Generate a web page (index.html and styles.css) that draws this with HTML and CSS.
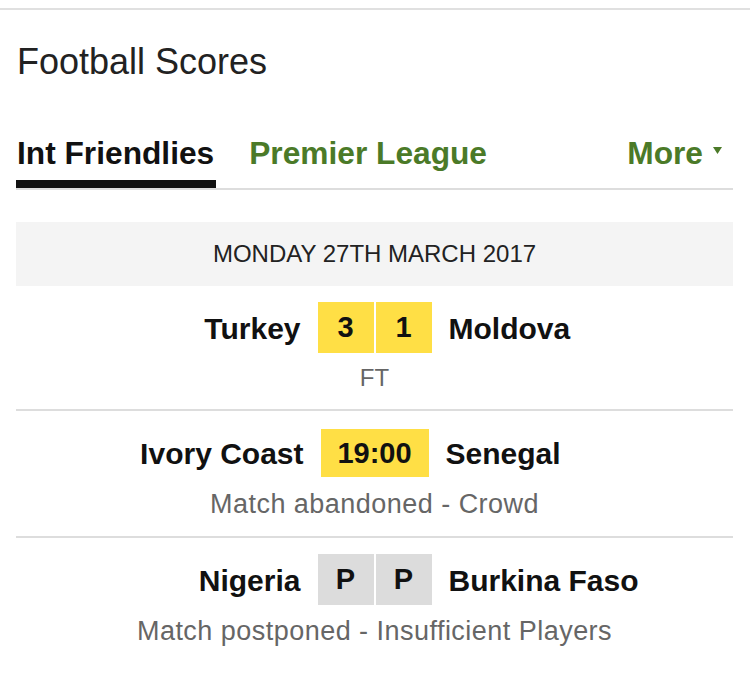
FILE: index.html
```html
<!DOCTYPE html>
<html lang="en">
<head>
<meta charset="utf-8">
<title>Football Scores</title>
<link rel="stylesheet" href="styles.css">
</head>
<body>
<div class="top-rule"></div>
<section class="widget">
  <h1 class="title">Football Scores</h1>
  <nav class="tabs">
    <a class="tab active">Int Friendlies</a>
    <a class="tab">Premier League</a>
    <a class="tab more">More<svg class="caret" width="9" height="7" viewBox="0 0 9 7"><path d="M0 0H9L4.5 7Z" fill="#4b7a28"/></svg></a>
  </nav>
  <div class="date-bar">MONDAY 27TH MARCH 2017</div>
  <div class="match">
    <div class="match-line">
      <span class="team home">Turkey</span>
      <span class="scores"><span class="box score">3</span><span class="box score">1</span></span>
      <span class="team away">Moldova</span>
    </div>
    <div class="status ft">FT</div>
  </div>
  <div class="match">
    <div class="match-line">
      <span class="team home">Ivory Coast</span>
      <span class="scores"><span class="box time">19:00</span></span>
      <span class="team away">Senegal</span>
    </div>
    <div class="status">Match abandoned - Crowd</div>
  </div>
  <div class="match last">
    <div class="match-line">
      <span class="team home">Nigeria</span>
      <span class="scores"><span class="box score grey">P</span><span class="box score grey">P</span></span>
      <span class="team away">Burkina Faso</span>
    </div>
    <div class="status">Match postponed - Insufficient Players</div>
  </div>
</section>
</body>
</html>
```
FILE: styles.css
```css
html, body {
  margin: 0;
  padding: 0;
  background: #ffffff;
  font-family: "Liberation Sans", Arial, Helvetica, sans-serif;
  color: #111111;
}

.top-rule {
  margin-top: 8px;
  height: 2px;
  background: #e0e0e0;
}

.widget {
  padding: 0 17px 0 16px;
}

.title {
  margin: 30px 0 0 1px;
  font-size: 36px;
  line-height: 44px;
  font-weight: normal;
  color: #222222;
}

.tabs {
  display: flex;
  align-items: flex-end;
  margin-top: 49px;
  border-bottom: 2px solid #dddddd;
}

.tab {
  display: block;
  font-size: 31.7px;
  line-height: 40px;
  font-weight: bold;
  color: #4b7a28;
  padding-bottom: 7px;
  border-bottom: 8px solid transparent;
}

.tab.active {
  color: #111111;
  border-bottom-color: #111111;
  padding: 0 2px 7px 1px;
  margin-right: 33px;
}

.tab.more {
  margin-left: auto;
  padding-right: 11px;
  display: flex;
  align-items: center;
}

.caret {
  display: block;
  margin-left: 10px;
  margin-top: -5px;
}

.date-bar {
  margin-top: 32px;
  height: 64px;
  line-height: 64px;
  background: #f4f4f4;
  text-align: center;
  font-size: 24px;
  color: #222222;
}

.match {
  padding: 16px 0 16px;
  border-bottom: 2px solid #dddddd;
}

.match.last {
  border-bottom: none;
}

.match-line {
  display: grid;
  grid-template-columns: 1fr auto 1fr;
  column-gap: 17px;
  align-items: center;
  min-height: 51px;
}

.team {
  font-size: 30px;
  font-weight: bold;
  color: #111111;
  line-height: 34px;
  padding-top: 2px;
}

.team.home {
  text-align: right;
}

.team.away {
  text-align: left;
}

.scores {
  display: flex;
  gap: 2px;
}

.box {
  display: flex;
  align-items: center;
  justify-content: center;
  background: #ffdf45;
  font-weight: bold;
  font-size: 29px;
  color: #111111;
}

.box.score {
  width: 56px;
  height: 51px;
}

.box.time {
  width: 108px;
  height: 48px;
  padding-top: 2px;
  box-sizing: border-box;
}

.box.grey {
  background: #dcdcdc;
}

.status {
  margin-top: 10px;
  text-align: center;
  font-size: 27px;
  line-height: 32px;
  letter-spacing: 0.47px;
  color: #666666;
}

.status.ft {
  font-size: 24px;
  line-height: 30px;
  letter-spacing: 0;
}
```
